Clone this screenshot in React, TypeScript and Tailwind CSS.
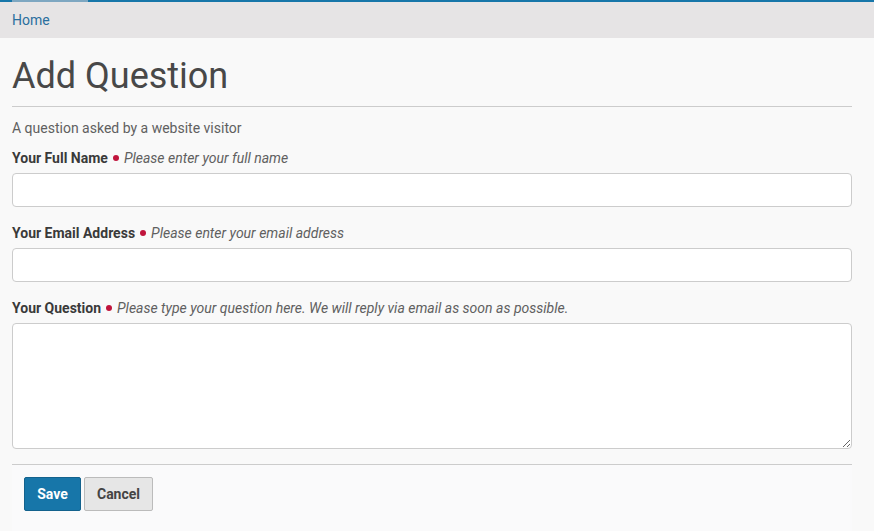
import { useState } from "react";

const FIELDS = [
  { label: "Your Full Name", help: "Please enter your full name", kind: "input" },
  { label: "Your Email Address", help: "Please enter your email address", kind: "input" },
  {
    label: "Your Question",
    help: "Please type your question here. We will reply via email as soon as possible.",
    kind: "textarea",
  },
];

export default function App() {
  const [values, setValues] = useState<string[]>(["", "", ""]);

  function update(i: number, v: string) {
    setValues((prev) => prev.map((p, j) => (j === i ? v : p)));
  }

  return (
    <div className="min-h-[531px] bg-[#f9f9f9] font-['Roboto',sans-serif]">
      <div className="flex h-[2px]">
        <div className="w-3 bg-[#1776a9]" />
        <div className="w-[76px] bg-[#7ea7c1]" />
        <div className="flex-1 bg-[#1776a9]" />
      </div>
      <div className="flex h-9 items-center bg-[#e6e4e5] px-3">
        <a href="#" className="text-[14px] text-[#2a6f9e]">
          Home
        </a>
      </div>

      <div className="ml-3 w-[840px]">
        <h1 className="pt-[14px] pb-[6px] text-[36px] leading-[48px] text-[#484848]">Add Question</h1>
        <div className="h-px bg-[#cccccc]" />
        <p className="mt-[13px] text-[14px] leading-[16px] text-[#606060]">
          A question asked by a website visitor
        </p>

        {FIELDS.map((f, i) => (
          <div key={f.label} className={i === 0 ? "mt-[14px]" : "mt-[18px]"}>
            <div className="flex items-center text-[14px] leading-[16px]">
              <span className="font-bold text-[#3a3a3a]">{f.label}</span>
              <span className="mx-[5px] inline-block h-[6px] w-[6px] rounded-full bg-[#c0143c]" />
              <span className="italic text-[#606060]">{f.help}</span>
            </div>
            {f.kind === "input" ? (
              <input
                value={values[i]}
                onChange={(e) => update(i, e.target.value)}
                className="mt-[7px] block h-[34px] w-full rounded-[4px] border border-[#cccccc] bg-white px-3 text-[14px] outline-none"
              />
            ) : (
              <textarea
                value={values[i]}
                onChange={(e) => update(i, e.target.value)}
                className="mt-[7px] block h-[126px] w-full rounded-[4px] border border-[#cccccc] bg-white px-3 py-2 text-[14px] outline-none"
              />
            )}
          </div>
        ))}

        <div className="mt-[15px] h-px bg-[#cccccc]" />
        <div className="flex gap-[3px] bg-[#fafafb] px-3 pt-3 pb-5">
          <button
            type="button"
            className="h-[34px] w-[57px] rounded-[2px] border border-[#13628d] bg-[#1776a9] text-[14px] font-bold text-white"
          >
            Save
          </button>
          <button
            type="button"
            className="h-[34px] w-[69px] rounded-[2px] border border-[#bbbbbb] bg-[#e6e6e6] text-[14px] font-bold text-[#444]"
          >
            Cancel
          </button>
        </div>
      </div>
    </div>
  );
}
